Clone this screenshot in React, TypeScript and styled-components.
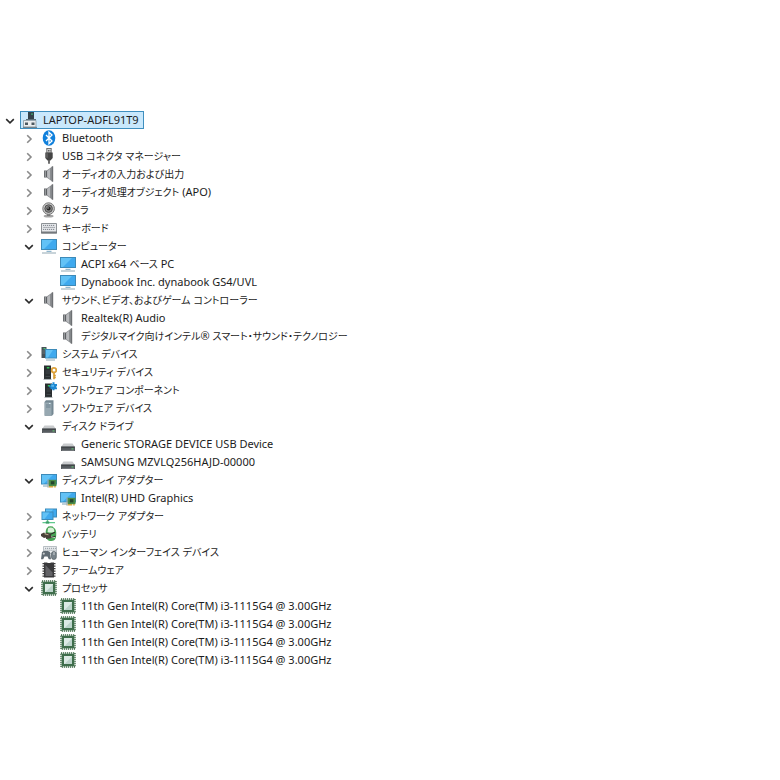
import React, { useState } from "react";
import styled, { createGlobalStyle } from "styled-components";

const GlobalStyle = createGlobalStyle`
  * { box-sizing: border-box; }
  body { margin: 0; background: #ffffff; }
`;

const Page = styled.main`
  min-height: 100vh;
  padding: 111px 1px 24px;
  background: #ffffff;
  color: #1c1c1c;
  font-family: "Noto Sans", "Noto Sans CJK JP", sans-serif;
  font-size: 11px;
  line-height: 18px;
`;

const TreeList = styled.ul`
  margin: 0;
  padding: 0;
  list-style: none;
`;

const Branch = styled.ul`
  margin: 0;
  padding: 0 0 0 19px;
  list-style: none;
`;

const Row = styled.div`
  display: flex;
  align-items: center;
  height: 18px;
`;

const Expander = styled.button<{ $open: boolean }>`
  display: flex;
  align-items: center;
  justify-content: center;
  flex: none;
  width: 19px;
  height: 18px;
  margin: 0;
  padding: 2px 1px 0 0;
  border: 0;
  background: transparent;
  color: ${(p) => (p.$open ? "#2b2b2b" : "#8a8a8a")};
`;

const Spacer = styled.span`
  flex: none;
  width: 19px;
`;

const Item = styled.span<{ $selected: boolean }>`
  display: inline-flex;
  align-items: center;
  gap: 5px;
  height: 18px;
  padding: 0 4px 0 1px;
  border: 1px solid ${(p) => (p.$selected ? "#3f8fbf" : "transparent")};
  background: ${(p) => (p.$selected ? "#c9e8fc" : "transparent")};
  white-space: nowrap;
`;

const IconSvg = styled.svg`
  display: block;
  flex: none;
  width: 16px;
  height: 16px;
`;

const Japanese = styled.span`
  font-family: "Noto Sans CJK JP", sans-serif;
  font-size: 10px;
  font-feature-settings: "palt";
`;

type IconName =
  | "root" | "bluetooth" | "usb" | "speaker" | "camera" | "keyboard" | "monitor"
  | "system" | "security" | "component" | "softDevice" | "disk" | "display"
  | "network" | "battery" | "hid" | "firmware" | "cpu";

const Tower = () => (
  <>
    <rect x="3" y="1.5" width="7" height="13.5" fill="#292e30" />
    <path d="M4.5 7h4.5M4.5 9h4.5M4.5 12.5h4.5" stroke="#4a5256" strokeWidth="0.7" />
    <rect x="5.8" y="3" width="2.6" height="1.5" fill="#35c257" />
    <path d="M2.5 15.4h8" stroke="#8d9599" strokeWidth="0.8" />
  </>
);

const Screen = ({ x, y, w, h }: { x: number; y: number; w: number; h: number }) => (
  <>
    <rect x={x + 0.5} y={y + 0.5} width={w - 1} height={h - 1} fill="#3fa9ee" stroke="#3d8ab8" />
    <path d={`M${x + 1} ${y + 1}h${w - 5}L${x + 3} ${y + h - 1}H${x + 1}z`} fill="#62c2f6" />
  </>
);

const drawings: Record<IconName, React.ReactNode> = {
  root: (
    <>
      <rect x="6" y="0" width="6" height="7" fill="#35434b" />
      <rect x="9" y="1.5" width="2" height="1.2" fill="#3fae74" />
      <path d="M4 7.5h10" stroke="#5d6f79" />
      <path d="M1.5 8.5h12.5v6.5H1.5z" fill="#eceeef" stroke="#8a99a2" strokeWidth="0.8" />
      <path d="M3 10.5h3v2.5H3zM9.5 10.5h3v2.5h-3z" fill="#4c5960" />
      <path d="M1 15.4h14" stroke="#6c7a82" />
    </>
  ),
  bluetooth: (
    <>
      <ellipse cx="8" cy="8" rx="6.3" ry="7.8" fill="#1080dc" />
      <path d="M5 5l6 6-3 2.8V2.2L11 5l-6 6" fill="none" stroke="#fff" strokeWidth="1.3" />
    </>
  ),
  usb: (
    <>
      <rect x="5.8" y="0.5" width="4.4" height="4.5" fill="#d5d5d5" stroke="#666" strokeWidth="0.9" />
      <path d="M7 2h.8v1.5H7zM8.6 2h.8v1.5h-.8z" fill="#444" />
      <path d="M4.3 4.5h7.4v5.4L9.5 12.4h-3L4.3 9.9z" fill="#454545" />
      <path d="M5.5 5.3h1v4.5h-1z" fill="#777" />
      <path d="M8 12v3.8" stroke="#555" strokeWidth="1.7" />
    </>
  ),
  speaker: (
    <>
      <path d="M3 4.5h3v7H3z" fill="#5e6164" />
      <path d="M3.8 5h1v6h-1z" fill="#a5a8ab" />
      <path d="M6 4.3L11.5.3v15.4L6 11.7z" fill="#8b8e91" />
      <path d="M6.2 5L9 3v10L6.2 11z" fill="#b8babd" />
      <path d="M11.5.3v15.4" stroke="#6d7073" strokeWidth="1.4" />
    </>
  ),
  camera: (
    <>
      <ellipse cx="7.6" cy="14" rx="5" ry="1.6" fill="#a4a4a4" />
      <path d="M6 11h3.2v3H6z" fill="#777" />
      <circle cx="7.6" cy="6.6" r="5.8" fill="#c9c9c9" stroke="#777" />
      <circle cx="7.6" cy="6.6" r="3.8" fill="#858585" stroke="#515151" />
      <circle cx="7.6" cy="6.6" r="2" fill="#252525" />
      <circle cx="7" cy="5.9" r=".7" fill="#ddd" />
    </>
  ),
  keyboard: (
    <>
      <path d="M.5 3.5h15v9.5H.5z" fill="#e6e8eb" stroke="#8d9296" />
      <path d="M2 5.4h12M2.5 7.4h12M2 9.4h12" stroke="#7c828a" strokeDasharray="1.2 .8" />
      <path d="M0 12.5h16" stroke="#74797d" strokeWidth="2" />
    </>
  ),
  monitor: (
    <>
      <Screen x={0} y={1} w={16} h={11} />
      <path d="M5.5 13.3h5" stroke="#76a6c2" />
      <path d="M1 15h14" stroke="#92a8b3" />
    </>
  ),
  system: (
    <>
      <path d="M.5 1h5v11h-5z" fill="#465157" />
      <path d="M2.5 2h2v1.3h-2z" fill="#4ac274" />
      <path d="M1.3 5h3.2M1.3 7h3.2" stroke="#7a878e" strokeWidth=".7" />
      <Screen x={4} y={3} w={12} h={9.5} />
      <path d="M5 14h9" stroke="#8da8b6" />
    </>
  ),
  security: (
    <>
      <Tower />
      <path d="M13 9v6.3M13 11.5h1.8M13 13.5h1.8" stroke="#d79b31" strokeWidth="1.6" />
      <circle cx="13" cy="6.2" r="2.3" fill="#fff" stroke="#dca13a" strokeWidth="1.8" />
    </>
  ),
  component: (
    <>
      <g transform="translate(1 0)"><Tower /></g>
      <path d="M9.5 2h2V.3h2V2H16v2.2h-.8v1.4h.8v1.6h-2.5v1h-2v-1h-2V5.6H8.2V3.8h1.3z" fill="#1e88d2" />
      <path d="M10.3 2.8H13v2h-2.7z" fill="#55b6ef" />
    </>
  ),
  softDevice: (
    <>
      <path d="M3.5 2L5 .3h7.5V14L11 15.7H3.5z" fill="#758893" />
      <path d="M4 2.5h6.5V15H4z" fill="#97a8b1" />
      <path d="M5 5h4.5M5 7h4.5" stroke="#6c8290" />
      <path d="M8 3h1.5v1H8z" fill="#d8eef6" />
    </>
  ),
  disk: (
    <>
      <path d="M3.5 7.5h9L15 11H1z" fill="#c9cbcd" />
      <path d="M1 10.5h14V15H1z" fill="#54595d" />
      <path d="M1.5 11.2h13" stroke="#33373a" strokeWidth=".8" />
      <path d="M2 14.4h12" stroke="#85898c" strokeWidth=".7" />
      <path d="M11.5 12.4h2v1h-2z" fill="#65cd76" />
    </>
  ),
  display: (
    <>
      <Screen x={0} y={2} w={16} h={10.5} />
      <path d="M2 14h5" stroke="#7aa1b6" />
      <path d="M7.5 7.8h8v6.4h-8z" fill="#4a8c48" />
      <path d="M9.8 9.2h3.6v3.2H9.8z" fill="#24462c" />
      <path d="M7.7 14.8h4.5M13.2 14.8h1.5" stroke="#d0a63b" strokeWidth="1.4" />
      <path d="M7 7.2v8.5" stroke="#a7aaa0" />
    </>
  ),
  network: (
    <>
      <Screen x={4} y={0.5} w={12} h={9} />
      <Screen x={0.5} y={3.5} w={12} h={8.5} />
      <path d="M6.5 12v2.5M1.5 14.6h12.5" stroke="#5fc98d" strokeWidth="1.4" />
      <path d="M4.8 13.4h3.4v2.2H4.8z" fill="#3c9c68" />
    </>
  ),
  battery: (
    <>
      <path d="M6.5 1.5Q6.5.3 9.5.3t3 1.2C15 3 15.5 5.5 15.2 9c0 3-1.2 6-4.8 6S5 13 4.7 9 5 2.5 6.5 1.5z" fill="#48a556" />
      <path d="M7 2.3c1.5-1 4-1 5.5.2.6 1 .8 2 .7 3.4-2.2.8-4.4.8-6.6 0z" fill="#d8f2d8" />
      <path d="M7.5 10h6.5v2H8z" fill="#b9e6bb" />
      <path d="M0 8l3-1.5 2 1.2V6.5l5 1.3v4.5l-5 .8v-1.5L3 12 0 10z" fill="#494139" />
      <path d="M3.5 7.8l4 1" stroke="#b9ad8c" />
      <path d="M9.5 8.2l4.5-2M10 11.3l4.5-1" stroke="#302e2a" strokeWidth="1.1" />
    </>
  ),
  hid: (
    <>
      <path d="M2.5 2.5h13v7h-13z" fill="#edf0f2" stroke="#a9b0b6" strokeWidth=".8" />
      <path d="M4 4.3h11M3.5 6.2h11" stroke="#8c959d" strokeDasharray="1.2 .8" />
      <path d="M1 8l2-1h4l2 1 1 7.3H7.8l-1.3-2.8h-3l-1.3 2.8H0z" fill="#606b73" />
      <path d="M2.8 8.6v2.2M1.7 9.7h2.2" stroke="#e2e5e7" strokeWidth=".7" />
      <rect x="10.5" y="7.5" width="4.8" height="8" rx="2.3" fill="#78838b" stroke="#525b62" strokeWidth=".7" />
      <path d="M13 8v3" stroke="#e4e8ea" strokeWidth=".8" />
    </>
  ),
  firmware: (
    <>
      <path d="M1.5 1.7h13M1.5 4.2h13M1.5 6.7h13M1.5 9.2h13M1.5 11.7h13M1.5 14.2h13" stroke="#3c3c3c" strokeWidth="1.3" />
      <path d="M3 .5h3.2q1.8 2.5 3.6 0H13v15H3z" fill="#3a3a3c" />
      <path d="M4.5 3l7 7.5V14h-7z" fill="#626266" />
    </>
  ),
  cpu: (
    <>
      <rect x="1" y="1" width="14" height="14" fill="none" stroke="#3f6a48" strokeWidth="1.4" strokeDasharray="1.2 .8" />
      <path d="M1.7 1.7h12.6v12.6H1.7z" fill="#3f6e4c" />
      <path d="M4 4h8v8H4z" fill="#dceae5" />
      <path d="M4.5 12L12 4.5V12z" fill="#bcd3cb" />
    </>
  ),
};

const DeviceIcon = ({ name }: { name: IconName }) => (
  <IconSvg viewBox="0 0 16 16" aria-hidden="true">{drawings[name]}</IconSvg>
);

const Chevron = ({ open }: { open: boolean }) => (
  <svg width="10" height="10" viewBox="0 0 10 10" fill="none" stroke="currentColor" strokeWidth="1.6" aria-hidden="true">
    <path d={open ? "M1.2 3.2L5 6.8l3.8-3.6" : "M3.2 1.2L7 5 3.2 8.8"} />
  </svg>
);

interface Device {
  label: string;
  icon: IconName;
  open?: boolean;
  children?: Device[];
}

const cpuName = "11th Gen Intel(R) Core(TM) i3-1115G4 @ 3.00GHz";

const computer: Device = {
  label: "LAPTOP-ADFL91T9",
  icon: "root",
  open: true,
  children: [
    { label: "Bluetooth", icon: "bluetooth", children: [] },
    { label: "USB コネクタ マネージャー", icon: "usb", children: [] },
    { label: "オーディオの入力および出力", icon: "speaker", children: [] },
    { label: "オーディオ処理オブジェクト (APO)", icon: "speaker", children: [] },
    { label: "カメラ", icon: "camera", children: [] },
    { label: "キーボード", icon: "keyboard", children: [] },
    {
      label: "コンピューター", icon: "monitor", open: true,
      children: [
        { label: "ACPI x64 ベース PC", icon: "monitor" },
        { label: "Dynabook Inc. dynabook GS4/UVL", icon: "monitor" },
      ],
    },
    {
      label: "サウンド、ビデオ、およびゲーム コントローラー", icon: "speaker", open: true,
      children: [
        { label: "Realtek(R) Audio", icon: "speaker" },
        { label: "デジタルマイク向けインテル® スマート・サウンド・テクノロジー", icon: "speaker" },
      ],
    },
    { label: "システム デバイス", icon: "system", children: [] },
    { label: "セキュリティ デバイス", icon: "security", children: [] },
    { label: "ソフトウェア コンポーネント", icon: "component", children: [] },
    { label: "ソフトウェア デバイス", icon: "softDevice", children: [] },
    {
      label: "ディスク ドライブ", icon: "disk", open: true,
      children: [
        { label: "Generic STORAGE DEVICE USB Device", icon: "disk" },
        { label: "SAMSUNG MZVLQ256HAJD-00000", icon: "disk" },
      ],
    },
    {
      label: "ディスプレイ アダプター", icon: "display", open: true,
      children: [{ label: "Intel(R) UHD Graphics", icon: "display" }],
    },
    { label: "ネットワーク アダプター", icon: "network", children: [] },
    { label: "バッテリ", icon: "battery", children: [] },
    { label: "ヒューマン インターフェイス デバイス", icon: "hid", children: [] },
    { label: "ファームウェア", icon: "firmware", children: [] },
    {
      label: "プロセッサ", icon: "cpu", open: true,
      children: [
        { label: cpuName, icon: "cpu" },
        { label: cpuName, icon: "cpu" },
        { label: cpuName, icon: "cpu" },
        { label: cpuName, icon: "cpu" },
      ],
    },
  ],
};

const japaneseRun = /([\u3000-\u30ff\u4e00-\u9fff]+)/;

const LabelText = ({ text }: { text: string }) => (
  <span>
    {text.split(japaneseRun).map((run, i) =>
      i % 2 === 1 ? <Japanese key={i} lang="ja">{run}</Japanese> : run
    )}
  </span>
);

const TreeNode = ({ device, selected = false }: { device: Device; selected?: boolean }) => {
  const [open, setOpen] = useState(Boolean(device.open));
  return (
    <li role="treeitem" aria-selected={selected} aria-expanded={device.children ? open : undefined}>
      <Row>
        {device.children ? (
          <Expander type="button" $open={open} aria-label={device.label} onClick={() => setOpen(!open)}>
            <Chevron open={open} />
          </Expander>
        ) : (
          <Spacer />
        )}
        <Item $selected={selected}>
          <DeviceIcon name={device.icon} />
          <LabelText text={device.label} />
        </Item>
      </Row>
      {open && device.children && device.children.length > 0 && (
        <Branch role="group">
          {device.children.map((child, i) => (
            <TreeNode key={i} device={child} />
          ))}
        </Branch>
      )}
    </li>
  );
};

export default function App() {
  return (
    <>
      <GlobalStyle />
      <Page>
        <TreeList role="tree">
          <TreeNode device={computer} selected />
        </TreeList>
      </Page>
    </>
  );
}
